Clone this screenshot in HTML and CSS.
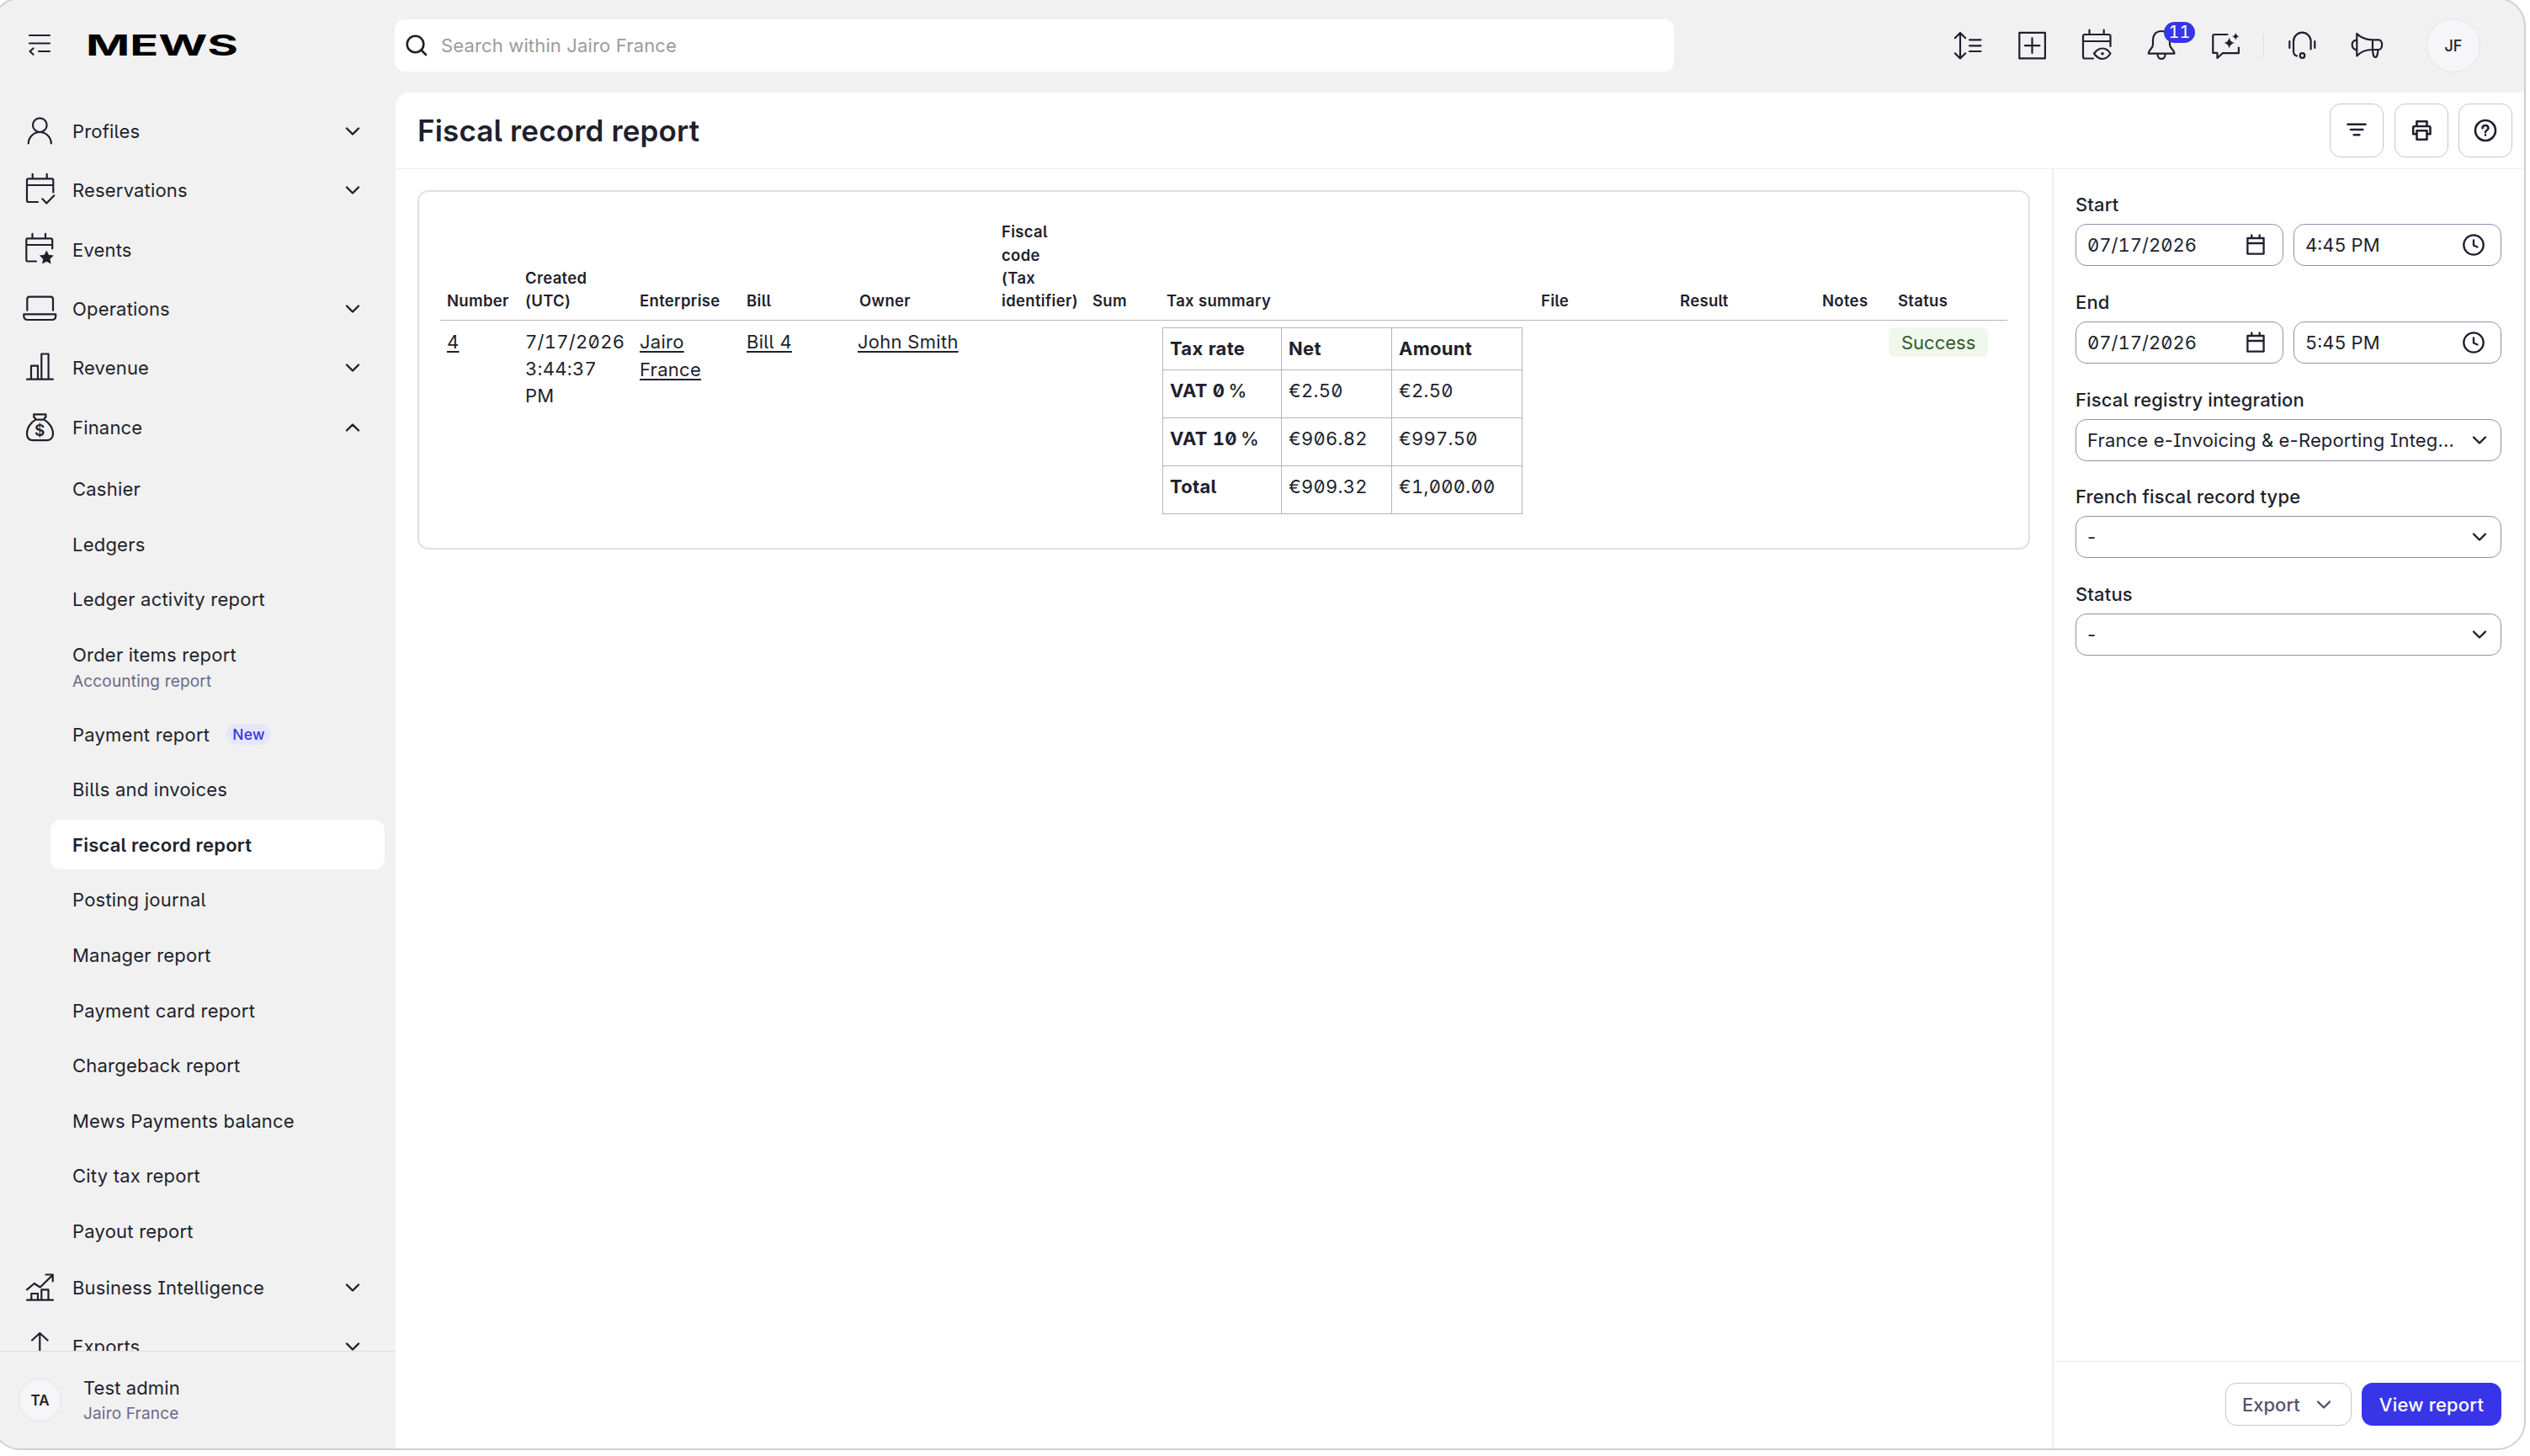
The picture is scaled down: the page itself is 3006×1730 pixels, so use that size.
FILE: index.html
```html
<!doctype html>
<html lang="en">
<head>
  <meta charset="utf-8">
  <title>Fiscal record report</title>
  <link rel="stylesheet" href="styles.css">
</head>
<body>
  <!-- Shared chevron and field icons -->
  <svg class="sprite">
    <symbol id="chevron" viewBox="0 0 20 20"><path d="M3 6.5l7 7 7-7"/></symbol>
    <symbol id="calendar" viewBox="0 0 28 28"><path d="M4.4 6h19.2v18.6H4.4zM4.4 12h19.2M9.3 2.5V6M18.7 2.5V6"/></symbol>
    <symbol id="clock" viewBox="0 0 28 28"><circle cx="14" cy="14" r="11.7"/><path d="M14 8.5v6l4.5 2"/></symbol>
  </svg>

  <div class="window">
    <!-- TOP BAR -->
    <header class="topbar">
      <div class="brand">
        <svg class="icon" viewBox="0 0 40 40"><path d="M8 8h24M8 17.500h24M19 27h13M12.500 23.500L8.500 27l4 3.700"/></svg>
        <svg class="logo" viewBox="0 0 180 28"><text x="-2" y="26" textLength="181" lengthAdjust="spacingAndGlyphs">MEWS</text></svg>
      </div>
      <div class="search">
        <svg class="search-icon" viewBox="0 0 28 28"><circle cx="12.5" cy="12.5" r="9.8"/><path d="M19.5 19.5l5.5 5.5"/></svg>
        <span>Search within Jairo France</span>
      </div>
      <div class="actions">
        <div class="action"><svg class="icon" viewBox="0 0 40 40"><path d="M11 5v30.5M4.8 11.2L11 5l6.2 6.2M4.8 29.3l6.2 6.2 6.2-6.2M22 13.3h13.5M22 20.3h13.5M22 27h13.5"/></svg></div>
        <div class="action"><svg class="icon" viewBox="0 0 40 40"><path d="M4.3 4.8h30.6v30.6H4.3zM19.500 11.3v17.6M10.8 20.1h17.6"/></svg></div>
        <div class="action"><svg class="icon" viewBox="0 0 40 40"><path d="M16 35.5H6q-2 0-2-2V9q0-2 2-2h28.500q2 0 2 2v12M4 15h32M11.500 1.500V7M28.700 1.500V7"/><path d="M17 29.500q4.500-6 10-6t9.500 6q-4 6.500-9.500 6.500t-10-6.500z"/><circle class="fill" cx="27" cy="29.700" r="1.800"/></svg></div>
        <div class="action">
          <svg class="icon" viewBox="0 0 40 40"><path d="M20 3C13 3 10 8 10 13.500V19C10 23.500 4.800 25 4.800 29.700H35.500C35.500 25 30 23.500 30 19V13.500C30 8 27 3 20 3zM15.500 30c0 8 9.200 8 9.200 0"/></svg>
          <span class="badge num">11</span>
        </div>
        <div class="action"><svg class="icon" viewBox="0 0 40 40"><path d="M21.500 7H6q-1.700 0-1.700 1.700V28.800H9.500V35l6.200-5.800H34.900V22.500"/><path class="fill" d="M23.700 10.500q1 5.500 6.300 6.500q-5.300 1-6.300 6.500q-1-5.500-6.300-6.500q5.300-1 6.300-6.500zM31.300 5q.7 3.600 4.300 4.300q-3.600.7-4.300 4.300q-.7-3.600-4.300-4.300q3.600-.7 4.300-4.300z"/></svg></div>
        <div class="divider"></div>
        <div class="action"><svg class="icon" viewBox="0 0 40 40"><path d="M14 32.500q-4-1-4-5.500V15a10.300 10.300 0 0 1 20.600 0v9.500M5.300 15v8M35.300 15v8"/><circle cx="20.500" cy="32" r="2.800"/></svg></div>
        <div class="action"><svg class="icon" viewBox="0 0 40 40"><path d="M8.300 6v26.500C14 26 20 25 27 25V13.300C20 13.300 14 12 8.300 6zM8.300 13.300c-7.500.5-7.500 11.500 0 12M27 13.300h7c5.500 0 5.500 11.700 0 11.700h-7M27 25c.5 5 .8 9 3.200 9s2.800-4 3.300-9"/></svg></div>
        <div class="avatar avatar-lg">JF</div>
      </div>
    </header>

    <div class="body">
      <!-- SIDEBAR -->
      <nav class="sidebar">
        <div class="menu">
          <div class="item"><svg class="icon" viewBox="0 0 40 40"><circle cx="20.300" cy="12.700" r="8.300"/><path d="M6.800 34.500a13.500 13.500 0 0 1 27 0"/></svg><span>Profiles</span><svg class="chev"><use href="#chevron"/></svg></div>
          <div class="item"><svg class="icon" viewBox="0 0 40 40"><path d="M18 34H6.700q-1.700 0-1.700-1.700V8q0-1.700 1.700-1.700h28q1.600 0 1.600 1.700v14.500M5 14h31M11.700.800v5.500M28.700.800v5.500M23.300 30.300l5 5.200 9-9.200"/></svg><span>Reservations</span><svg class="chev"><use href="#chevron"/></svg></div>
          <div class="item"><svg class="icon" viewBox="0 0 40 40"><path d="M16 33.500H6q-1.700 0-1.700-1.700V8q0-1.700 1.700-1.700h27.500q1.700 0 1.700 1.700v10.500M4.300 14h31M11.500.800v5.500M27 .800v5.500"/><path class="fill" d="M28.300 20.500l2.600 5.200 5.900.9-4.300 4.100 1 5.800-5.200-2.700-5.200 2.700 1-5.800-4.300-4.100 5.900-.9z"/></svg><span>Events</span></div>
          <div class="item"><svg class="icon" viewBox="0 0 40 40"><path d="M5.300 21.700V8.500q0-2.800 2.800-2.800h25q2.900 0 2.900 2.800v13.200M1.300 26.300h37.900v2q0 4.700-4.500 4.700H6q-4.700 0-4.700-4.700z"/></svg><span>Operations</span><svg class="chev"><use href="#chevron"/></svg></div>
          <div class="item"><svg class="icon" viewBox="0 0 40 40"><path d="M5 33.700h31M10 33.700V17.700h8v16M22.300 33.700V3.500h8.300v30.200"/></svg><span>Revenue</span><svg class="chev"><use href="#chevron"/></svg></div>
          <div class="item"><svg class="icon" viewBox="0 0 40 40"><path d="M13.200 4.300h14.200v3.500q-1.500 0-2 2.800H15.300q-.5-2.800-2.100-2.800zM15.300 10.600C9 14 5 21 5 27.500c0 5 3 7.700 7.500 7.700h15.700c4.500 0 7.800-2.700 7.800-7.700 0-6.500-4.300-13.500-10.600-16.900"/><text class="dollar" x="20.300" y="29.500" text-anchor="middle">$</text></svg><span>Finance</span><svg class="chev up"><use href="#chevron"/></svg></div>

          <div class="submenu">
            <div class="subitem">Cashier</div>
            <div class="subitem">Ledgers</div>
            <div class="subitem">Ledger activity report</div>
            <div class="subitem double">Order items report<small>Accounting report</small></div>
            <div class="subitem">Payment report <span class="tag-new">New</span></div>
            <div class="subitem">Bills and invoices</div>
            <div class="subitem active">Fiscal record report</div>
            <div class="subitem">Posting journal</div>
            <div class="subitem">Manager report</div>
            <div class="subitem">Payment card report</div>
            <div class="subitem">Chargeback report</div>
            <div class="subitem">Mews Payments balance</div>
            <div class="subitem">City tax report</div>
            <div class="subitem">Payout report</div>
          </div>

          <div class="item"><svg class="icon" viewBox="0 0 40 40"><path d="M5 34.700h31M10.300 34.700v-7.700h7.700v7.700M22.300 34.700V22.300h8.200v12.400M5 22.300l8.700-7.300 7 4.500L35.500 5M27.500 4.500h8.200V12.500"/></svg><span>Business Intelligence</span><svg class="chev"><use href="#chevron"/></svg></div>
          <div class="item"><svg class="icon" viewBox="0 0 40 40"><path d="M20.300 4v30M11 12.500L20.300 4l9.300 8.500"/></svg><span>Exports</span><svg class="chev"><use href="#chevron"/></svg></div>
        </div>
        <div class="user">
          <div class="avatar">TA</div>
          <div class="user-text"><span>Test admin</span><small>Jairo France</small></div>
        </div>
      </nav>

      <!-- MAIN -->
      <main class="main">
        <div class="title-row">
          <h1>Fiscal record report</h1>
          <div class="tools">
            <div class="tool"><svg class="icon bold" viewBox="0 0 40 40"><path d="M9.500 12.700h21M13 19h14.300M16.700 25.200h6.600"/></svg></div>
            <div class="tool"><svg class="icon bold" viewBox="0 0 40 40"><path d="M14.500 15V9.300h12V15M14.500 24.300H10.200V17q0-2 2-2H28.500q2 0 2 2v7.300H26.500M14.500 20.200h12v10.500H14.500z"/></svg></div>
            <div class="tool"><svg class="icon bold" viewBox="0 0 40 40"><circle cx="20" cy="20" r="12"/><path d="M16.500 17.300c0-4.500 7-4.500 7 0 0 2.500-3.500 2.500-3.500 5M20 25.300v.3"/></svg></div>
          </div>
        </div>

        <div class="columns">
          <div class="content">
            <div class="card">
              <table class="report">
                <colgroup>
                  <col class="c-number"><col class="c-created"><col class="c-enterprise"><col class="c-bill"><col class="c-owner"><col class="c-code"><col class="c-sum"><col class="c-tax"><col class="c-file"><col class="c-result"><col class="c-notes"><col>
                </colgroup>
                <thead>
                  <tr>
                    <th>Number</th><th>Created (UTC)</th><th>Enterprise</th><th>Bill</th><th>Owner</th><th>Fiscal<br>code<br>(Tax<br>identifier)</th><th>Sum</th><th>Tax summary</th><th>File</th><th>Result</th><th>Notes</th><th>Status</th>
                  </tr>
                </thead>
                <tbody>
                  <tr>
                    <td><a>4</a></td>
                    <td class="num date">7/17/2026<br>3:44:37<br>PM</td>
                    <td><a>Jairo France</a></td>
                    <td><a>Bill 4</a></td>
                    <td class="owner"><a>John Smith</a></td>
                    <td></td>
                    <td></td>
                    <td class="tax-cell">
                      <table class="tax num">
                        <tr><th>Tax rate</th><th>Net</th><th>Amount</th></tr>
                        <tr><th>VAT 0 <i>%</i></th><td>€2.50</td><td>€2.50</td></tr>
                        <tr><th>VAT 10 <i>%</i></th><td>€906.82</td><td>€997.50</td></tr>
                        <tr><th>Total</th><td>€909.32</td><td>€1,000.00</td></tr>
                      </table>
                    </td>
                    <td></td>
                    <td></td>
                    <td></td>
                    <td class="status-cell"><span class="status">Success</span></td>
                  </tr>
                </tbody>
              </table>
            </div>
          </div>

          <!-- FILTERS -->
          <aside class="filters">
            <div class="fields">
              <div class="field">
                <label>Start</label>
                <div class="pair">
                  <div class="input num"><span>07/17/2026</span><svg class="field-icon"><use href="#calendar"/></svg></div>
                  <div class="input num"><span>4:45 PM</span><svg class="field-icon"><use href="#clock"/></svg></div>
                </div>
              </div>
              <div class="field">
                <label>End</label>
                <div class="pair">
                  <div class="input num"><span>07/17/2026</span><svg class="field-icon"><use href="#calendar"/></svg></div>
                  <div class="input num"><span>5:45 PM</span><svg class="field-icon"><use href="#clock"/></svg></div>
                </div>
              </div>
              <div class="field">
                <label>Fiscal registry integration</label>
                <div class="input select"><span>France e-Invoicing &amp; e-Reporting Integ...</span><svg class="chev"><use href="#chevron"/></svg></div>
              </div>
              <div class="field">
                <label>French fiscal record type</label>
                <div class="input select"><span>-</span><svg class="chev"><use href="#chevron"/></svg></div>
              </div>
              <div class="field">
                <label>Status</label>
                <div class="input select"><span>-</span><svg class="chev"><use href="#chevron"/></svg></div>
              </div>
            </div>
            <div class="filter-actions">
              <div class="btn"><span>Export</span><svg class="chev"><use href="#chevron"/></svg></div>
              <div class="btn primary">View report</div>
            </div>
          </aside>
        </div>
      </main>
    </div>
  </div>
</body>
</html>
```
FILE: styles.css
```css
/*----------------------------------------------
 * BASE
 *----------------------------------------------*/
* {
  box-sizing: border-box;
}

body {
  margin: 0;
  height: 1730px;
  overflow: hidden;
  background: #fff;
  color: #211f2d;
  font-family: Inter, "Liberation Sans", sans-serif;
  font-size: 22px;
  font-feature-settings: "ss02", "zero";
}

.sprite {
  position: absolute;
  width: 0;
  height: 0;
}

svg {
  display: block;
  flex: none;
  overflow: visible;
  fill: none;
  stroke: #211f2d;
  stroke-width: 2.2;
  stroke-linecap: round;
  stroke-linejoin: round;
}

.fill {
  fill: #211f2d;
  stroke: none;
}

.icon {
  width: 40px;
  height: 40px;
}

.bold {
  stroke-width: 2.6;
}

.chev {
  width: 20px;
  height: 20px;
  stroke-width: 2.4;
}

.up {
  transform: rotate(180deg);
}

.num {
  font-feature-settings: "ss02", "zero", "tnum";
}

/* The window frame runs a little past the left and top edges */
.window {
  display: flex;
  flex-direction: column;
  width: 3011px;
  height: 1726px;
  margin: -3px 0 0 -10px;
  padding: 1px 0 0 8px;
  overflow: hidden;
  background: #f1f1f1;
  border: 2px solid #cfcfcf;
  border-radius: 34px;
}

/*----------------------------------------------
 * TOP BAR
 *----------------------------------------------*/
.topbar {
  display: flex;
  align-items: center;
  flex: none;
  height: 110px;
  padding-bottom: 2px;
}

.brand {
  display: flex;
  align-items: center;
  gap: 37px;
  width: 469px;
  padding-left: 27px;
}

.logo {
  width: 180px;
  height: 28px;
  fill: #000;
  stroke: none;
  font-size: 34px;
  font-weight: 700;
}

.search {
  display: flex;
  align-items: center;
  gap: 15px;
  width: 1520px;
  height: 62px;
  padding-left: 12px;
  background: #fff;
  border-radius: 12px;
  color: #9b9b9b;
  letter-spacing: 0.150px;
}

.search-icon {
  width: 28px;
  height: 28px;
  stroke-width: 2.6;
}

.actions {
  display: flex;
  align-items: center;
  margin-left: auto;
  padding-right: 52px;
}

.action {
  position: relative;
  padding: 0 18.4px;
}

.badge {
  position: absolute;
  top: -8px;
  left: 41px;
  width: 37px;
  height: 25px;
  border-radius: 13px;
  background: #3835e8;
  color: #fff;
  font-size: 20px;
  line-height: 25px;
  text-align: center;
}

.divider {
  width: 1px;
  height: 29px;
  margin: 0 6px;
  background: #dcdce6;
}

.avatar {
  display: flex;
  align-items: center;
  justify-content: center;
  width: 51px;
  height: 51px;
  border: 1px solid #e2e1ec;
  border-radius: 50%;
  background: #f6f6f9;
  font-size: 17px;
  font-weight: 600;
}

.avatar-lg {
  width: 64px;
  height: 64px;
  margin-left: 33px;
  font-size: 18px;
  font-weight: 500;
}

/*----------------------------------------------
 * SIDEBAR
 *----------------------------------------------*/
.body {
  display: flex;
  flex: 1;
  min-height: 0;
}

.sidebar {
  display: flex;
  flex-direction: column;
  width: 470px;
}

.menu {
  flex: 1;
  min-height: 0;
  padding-top: 11px;
  overflow: hidden;
}

.item {
  display: flex;
  align-items: center;
  height: 70.300px;
  padding: 0 41px 0 27px;
  letter-spacing: 0.180px;
}

.item .icon {
  margin-right: 19px;
}

.item .chev {
  margin-left: auto;
}

.dollar {
  fill: #211f2d;
  stroke: none;
  font-size: 19px;
  font-weight: 600;
}

.submenu {
  display: flex;
  flex-direction: column;
  gap: 6.600px;
  padding: 9px 13px 2px 60px;
}

.subitem {
  display: flex;
  align-items: center;
  height: 59px;
  padding-left: 26px;
  border-radius: 13px;
  letter-spacing: 0.220px;
}

.double {
  flex-direction: column;
  align-items: flex-start;
  height: 88px;
  padding-top: 16px;
}

small {
  color: #6b6988;
  font-size: 19px;
  letter-spacing: 0.180px;
}

.double small {
  margin-top: 7px;
}

.active {
  background: #fff;
  font-weight: 600;
}

.tag-new {
  height: 25px;
  margin-left: 20px;
  padding: 0 7px;
  border-radius: 13px;
  background: #e6e6fb;
  color: #3835e8;
  font-size: 17.500px;
  font-weight: 500;
  line-height: 25px;
}

.user {
  display: flex;
  align-items: center;
  gap: 26px;
  flex: none;
  height: 116px;
  padding-left: 22px;
  border-top: 1px solid #dddce9;
}

.user-text {
  display: flex;
  flex-direction: column;
  gap: 6px;
  letter-spacing: 0.100px;
}

/*----------------------------------------------
 * MAIN
 *----------------------------------------------*/
.main {
  display: flex;
  flex-direction: column;
  flex: 1;
  background: #fff;
  border-radius: 16px 0 0 0;
}

.title-row {
  display: flex;
  align-items: center;
  justify-content: space-between;
  flex: none;
  height: 91px;
  padding: 0 14px 0 26px;
  border-bottom: 1px solid #ededf1;
}

h1 {
  margin: 0;
  font-size: 35px;
  font-weight: 600;
  letter-spacing: 0.150px;
}

.tools {
  display: flex;
  gap: 12.500px;
}

.tool {
  padding: 11px;
  border: 1px solid #c6c4d8;
  border-radius: 13px;
}

.columns {
  display: flex;
  flex: 1;
}

.content {
  flex: 1;
  padding: 25px 26px;
}

.card {
  height: 427px;
  padding: 25px;
  border: 2px solid #e0dfea;
  border-radius: 13px;
}

/*----------------------------------------------
 * REPORT TABLE
 *----------------------------------------------*/
table {
  border-collapse: collapse;
}

.report {
  width: 1862px;
  table-layout: fixed;
}

.c-number { width: 93px; }
.c-created { width: 136px; }
.c-enterprise { width: 127px; }
.c-bill { width: 134px; }
.c-owner { width: 169px; }
.c-code { width: 108px; }
.c-sum { width: 88px; }
.c-tax { width: 445px; }
.c-file { width: 165px; }
.c-result { width: 169px; }
.c-notes { width: 90px; }

.report > thead th {
  height: 127px;
  padding: 0 0 8px 8px;
  border-bottom: 1px solid #b5b5ba;
  font-size: 18.500px;
  font-weight: 600;
  letter-spacing: 0.320px;
  line-height: 27.300px;
  text-align: left;
  vertical-align: bottom;
}

.report > tbody > tr > td {
  padding: 9px 0 0 8px;
  letter-spacing: 0.280px;
  line-height: 33px;
  vertical-align: top;
}

.report > tbody > tr > .date {
  line-height: 32px;
}

.report > tbody > tr > .owner {
  padding-left: 6px;
}

.report a {
  text-decoration: underline;
  text-decoration-thickness: 2px;
  text-underline-offset: 3px;
}

.report > tbody > tr > .tax-cell {
  padding: 8px 0 0 3px;
}

.tax th,
.tax td {
  height: 57px;
  padding: 8px;
  border: 1px solid #b5b5ba;
  line-height: 33px;
  text-align: left;
  vertical-align: top;
}

.tax tr:first-child th {
  height: 49px;
}

.tax th:nth-child(1) { width: 141px; }
.tax :nth-child(2) { width: 131px; }
.tax :nth-child(3) { width: 155px; }

.tax i {
  margin-left: -2px;
  font-style: normal;
  font-weight: 500;
}

.report > tbody > tr > .status-cell {
  padding: 8px 0 0 0;
  letter-spacing: 0;
}

.status {
  display: inline-block;
  height: 35px;
  margin-left: -3px;
  padding: 0 15px;
  border-radius: 6px;
  background: #f0f8ec;
  color: #345a2d;
  line-height: 36px;
}

/*----------------------------------------------
 * FILTERS
 *----------------------------------------------*/
.filters {
  display: flex;
  flex-direction: column;
  justify-content: space-between;
  width: 561px;
  border-left: 2px solid #eeeef4;
}

.fields {
  padding: 27px 27px 0 26px;
}

.field {
  height: 115.800px;
}

label {
  display: block;
  height: 38px;
  font-weight: 500;
  letter-spacing: 0.150px;
  line-height: 30px;
}

.pair {
  display: flex;
  gap: 12px;
}

.input {
  display: flex;
  align-items: center;
  justify-content: space-between;
  flex: 1;
  height: 50px;
  padding: 0 18px 0 13px;
  border: 1px solid #918fb0;
  border-radius: 13px;
}

.select {
  padding-right: 15px;
  letter-spacing: 0.160px;
}

.field-icon {
  width: 28px;
  height: 28px;
  stroke-width: 2.300;
}

.filter-actions {
  display: flex;
  justify-content: flex-end;
  gap: 12px;
  height: 104px;
  padding: 25px 27px 0 0;
  border-top: 1px solid #ededf1;
}

.btn {
  display: flex;
  align-items: center;
  justify-content: space-between;
  width: 150px;
  height: 51px;
  padding: 0 22px 0 19px;
  border: 1px solid #c6c4d8;
  border-radius: 13px;
  color: #55536d;
  font-weight: 500;
}

.btn svg {
  stroke: #55536d;
}

.primary {
  justify-content: center;
  width: 166px;
  padding: 0;
  border: 0;
  background: #3835e8;
  color: #fff;
  letter-spacing: 0.200px;
}
```
